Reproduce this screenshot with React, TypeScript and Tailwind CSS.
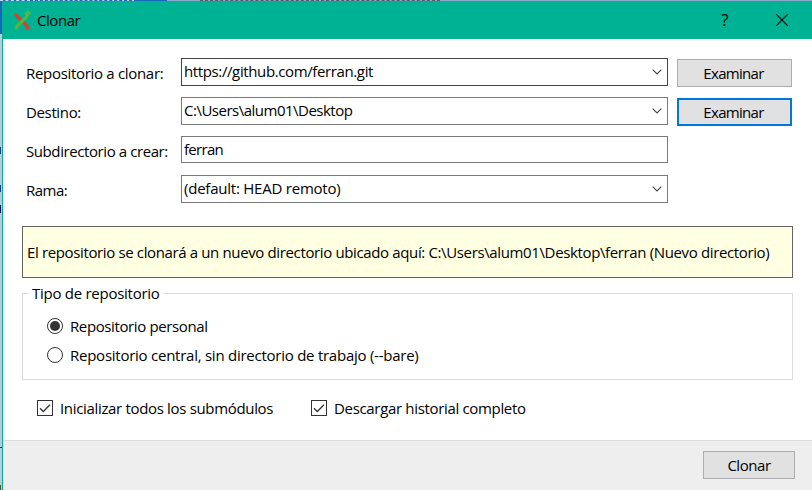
import React from "react";

function Chevron() {
  return (
    <svg width="10" height="6" viewBox="0 0 10 6" fill="none" stroke="#444" strokeWidth="1.1" className="mr-[5px] shrink-0">
      <path d="M0.7 0.7 L5 5 L9.3 0.7" />
    </svg>
  );
}

function Label({ children, className }: { children: React.ReactNode; className: string }) {
  return <label className={`mt-px w-[155px] shrink-0 leading-7 ${className}`}>{children}</label>;
}

function Field({ children, className, combo = true }: { children: React.ReactNode; className: string; combo?: boolean }) {
  return (
    <div className={`flex w-[487px] shrink-0 items-center justify-between border bg-white pl-[2px] ${className}`}>
      <span className="pb-[2px]">{children}</span>
      {combo && <Chevron />}
    </div>
  );
}

function Check({ children, className }: { children: React.ReactNode; className: string }) {
  return (
    <label className={`flex items-center gap-[7px] ${className}`}>
      <svg width="16" height="16" viewBox="0 0 16 16" fill="none" stroke="#333" className="shrink-0">
        <rect x="0.5" y="0.5" width="15" height="15" fill="#fff" />
        <path d="M3 8.2 L6.3 11.5 L13 4.8" strokeWidth="1.3" />
      </svg>
      <span>{children}</span>
    </label>
  );
}

function Radio({ children, className, checked = false }: { children: React.ReactNode; className: string; checked?: boolean }) {
  return (
    <label className={`flex h-[29px] items-center gap-[7px] ${className}`}>
      <svg width="16" height="16" viewBox="0 0 16 16" className="-mt-px shrink-0">
        <circle cx="8" cy="8" r="7.5" fill="#fff" stroke="#333" />
        {checked && <circle cx="8" cy="8" r="5" fill="#333" />}
      </svg>
      <span className="pb-[2px]">{children}</span>
    </label>
  );
}

export default function App() {
  return (
    <div className="flex h-[490px] w-[812px] flex-col overflow-hidden bg-white font-['Open_Sans','Noto_Sans',sans-serif] text-[15px] leading-5 whitespace-nowrap text-black">
      <div className="flex h-px shrink-0 bg-[#8da9cb]">
        <div className="w-[30px] border-t border-dashed border-[#c9dcf1] bg-[#1967bd]" />
        <div className="w-[107px] border-t border-dashed border-[#1967bd] bg-[#c9dcf1]" />
        <div className="w-[30px] bg-[#1967bd]" />
        <div className="w-[33px]" />
        <div className="w-[240px] border-t border-dashed border-[#555b66]" />
      </div>
      <div className="flex min-h-0 flex-1">
        <div className="flex w-[2px] shrink-0 flex-col bg-[#c0c9d7]">
          <div className="h-[33px] bg-[#1967bd]" />
          <div className="mt-[113px] h-[7px] w-px bg-[#173f85]" />
          <div className="mt-[31px] h-[7px] w-px bg-[#173f85]" />
          <div className="mt-[13px] h-[8px] w-px bg-[#25125b]" />
          <div className="mt-[234px] h-px bg-[#333]" />
          <div className="mt-[37px] h-[5px] w-px bg-[#555021]" />
        </div>
        <div className="flex flex-1 flex-col border-l border-[#00b294]">
          <header className="flex h-[38px] shrink-0 items-center bg-[#00b294]">
            <svg width="18" height="20" viewBox="0 0 18 20" fill="none" strokeWidth="3.4" className="ml-[11px]">
              <path d="M1.8 3.5 C3 10.5 13 10.5 14 19.5" stroke="#dc3c2c" />
              <path d="M1.8 19.5 C3 11.5 13 11 13.7 3.5" stroke="#4fb748" />
              <path d="M9.5 4.3 L14 0 L17.8 4.3 Z" fill="#4fb748" />
            </svg>
            <span className="ml-[5px] flex-1 tracking-[-0.45px]">Clonar</span>
            <span className="w-[10px] text-center text-[17px]">?</span>
            <svg width="12" height="12" viewBox="0 0 12 12" stroke="#000" strokeWidth="1.1" className="mr-[24px] ml-[46px]">
              <path d="M0.4 0.4 L11.6 11.6 M11.6 0.4 L0.4 11.6" />
            </svg>
          </header>

          <main className="flex flex-1 flex-col pt-[19px] pr-[19px] pl-[19px]">
            <section className="flex flex-col pl-1">
              <div className="flex h-[39px]">
                <Label className="tracking-[-0.31px]">Repositorio a clonar:</Label>
                <Field className="h-7 border-[#444] tracking-[-0.38px]">https://github.com/ferran.git</Field>
                <button className="mt-px ml-[9px] h-7 w-[115px] border border-[#adadad] bg-[#e1e1e1] pr-[2px] pb-px tracking-[-0.69px]">Examinar</button>
              </div>
              <div className="flex h-[39px]">
                <Label className="tracking-[-0.36px]">Destino:</Label>
                <Field className="h-7 border-[#7a7a7a] tracking-[-0.5px]">C:\Users\alum01\Desktop</Field>
                <button className="mt-px ml-[9px] h-7 w-[115px] border-2 border-[#0078d7] bg-[#e1e1e1] pr-[2px] pb-px tracking-[-0.69px]">Examinar</button>
              </div>
              <div className="flex h-[39px]">
                <Label className="tracking-[-0.41px]">Subdirectorio a crear:</Label>
                <Field combo={false} className="h-[27px] border-[#7a7a7a] tracking-[-0.7px]">ferran</Field>
              </div>
              <div className="flex h-7">
                <Label className="tracking-[-0.5px]">Rama:</Label>
                <Field className="h-7 border-[#7a7a7a] tracking-[-0.23px]">(default: HEAD remoto)</Field>
              </div>
            </section>

            <p className="mt-[23px] flex h-[52px] w-[771px] items-center border border-[#646464] bg-[#ffffe1] pl-1 tracking-[-0.365px]">
              <span className="pb-px">El repositorio se clonará a un nuevo directorio ubicado aquí: C:\Users\alum01\Desktop\ferran (Nuevo directorio)</span>
            </p>

            <fieldset className="mt-[5px] h-[97px] w-[771px] border border-[#dcdcdc] pl-6">
              <legend className="-ml-[18px] h-[21px] px-[3px] tracking-[-0.27px]">Tipo de repositorio</legend>
              <div className="mt-[8px]">
                <Radio checked className="tracking-[-0.385px]">Repositorio personal</Radio>
                <Radio className="tracking-[-0.25px]">Repositorio central, sin directorio de trabajo (--bare)</Radio>
              </div>
            </fieldset>

            <div className="mt-[18px] ml-[15px] flex">
              <Check className="w-[274px] tracking-[-0.33px]">Inicializar todos los submódulos</Check>
              <Check className="tracking-[-0.33px]">Descargar historial completo</Check>
            </div>
          </main>

          <footer className="flex h-[50px] shrink-0 justify-end border-t border-[#dcdcdc] bg-[#eee] pt-[10px] pr-[17px]">
            <button className="h-7 w-[92px] border border-[#adadad] bg-[#e1e1e1] pb-px tracking-[-0.45px]">Clonar</button>
          </footer>
        </div>
      </div>
    </div>
  );
}
